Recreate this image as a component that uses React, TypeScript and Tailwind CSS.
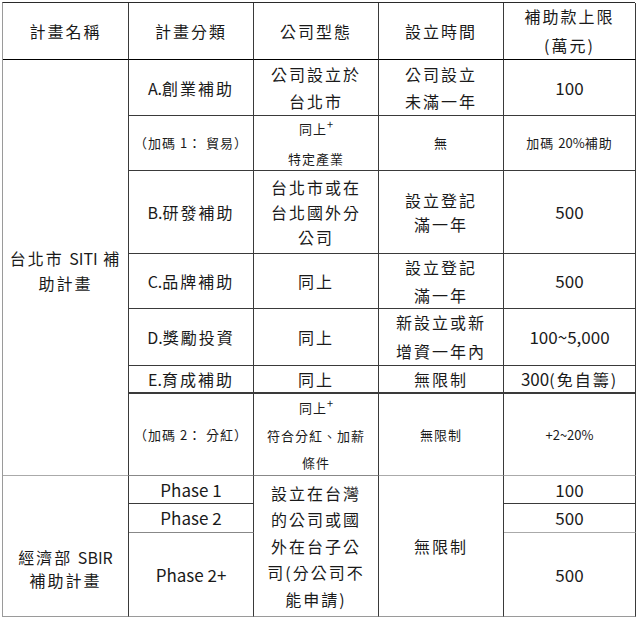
import React from "react";

const cell =
  "flex flex-col items-center justify-center text-center border-r border-b border-[#3a3a3a]";
const big = "text-[16px] tracking-[2px]";
const small = "text-[13px] tracking-[1px]";
const num = "text-[17px]";

function L({ children }: { children: React.ReactNode }) {
  return <span className="tracking-normal">{children}</span>;
}

function Plus() {
  return <span className="relative -top-[5px] text-[11px] tracking-normal">+</span>;
}

export default function App() {
  return (
    <div className="w-[640px] h-[618px] bg-white pl-[2px] pt-[2px] text-[#1a1a1a] font-['Noto_Sans_CJK_TC','Noto_Sans',sans-serif]">
      <div className="grid w-[633px] grid-cols-[126px_125px_125px_125px_132px] grid-rows-[57px_56px_55px_83px_55px_57px_28px_82px_28px_29px_84px] border-l border-t border-l-[#9a9a9a] border-t-[#2a2a2a]">
        {/* header */}
        <div className={`${cell} ${big} col-start-1 row-start-1 border-b-black`}>計畫名稱</div>
        <div className={`${cell} ${big} col-start-2 row-start-1 border-b-black`}>計畫分類</div>
        <div className={`${cell} ${big} col-start-3 row-start-1 border-b-black`}>公司型態</div>
        <div className={`${cell} ${big} col-start-4 row-start-1 border-b-black`}>設立時間</div>
        <div className={`${cell} ${big} col-start-5 row-start-1 border-b-black leading-[29px]`}>
          <span>補助款上限</span>
          <span>(萬元)</span>
        </div>

        {/* SITI */}
        <div className={`${cell} ${big} col-start-1 row-start-2 row-span-7 leading-[25px] pt-[6px] border-b-[#aaaaaa]`}>
          <span>
            台北市 <L>SITI</L> 補
          </span>
          <span>助計畫</span>
        </div>

        {/* A */}
        <div className={`${cell} ${big} col-start-2 row-start-2`}>
          <span>
            <L>A.</L>創業補助
          </span>
        </div>
        <div className={`${cell} ${big} col-start-3 row-start-2 leading-[27px]`}>
          <span>公司設立於</span>
          <span>台北市</span>
        </div>
        <div className={`${cell} ${big} col-start-4 row-start-2 leading-[27px]`}>
          <span>公司設立</span>
          <span>未滿一年</span>
        </div>
        <div className={`${cell} ${num} col-start-5 row-start-2`}>100</div>

        {/* 加碼1 */}
        <div className={`${cell} ${small} col-start-2 row-start-3`}>（加碼 1： 貿易）</div>
        <div className={`${cell} ${small} col-start-3 row-start-3 leading-[29px]`}>
          <span>
            同上
            <Plus />
          </span>
          <span>特定產業</span>
        </div>
        <div className={`${cell} ${small} col-start-4 row-start-3`}>無</div>
        <div className={`${cell} ${small} col-start-5 row-start-3`}>
          <span>
            加碼 <L>20%</L>補助
          </span>
        </div>

        {/* B */}
        <div className={`${cell} ${big} col-start-2 row-start-4`}>
          <span>
            <L>B.</L>研發補助
          </span>
        </div>
        <div className={`${cell} ${big} col-start-3 row-start-4 leading-[25px]`}>
          <span>台北市或在</span>
          <span>台北國外分</span>
          <span>公司</span>
        </div>
        <div className={`${cell} ${big} col-start-4 row-start-4 leading-[24px]`}>
          <span>設立登記</span>
          <span>滿一年</span>
        </div>
        <div className={`${cell} ${num} col-start-5 row-start-4`}>500</div>

        {/* C */}
        <div className={`${cell} ${big} col-start-2 row-start-5`}>
          <span>
            <L>C.</L>品牌補助
          </span>
        </div>
        <div className={`${cell} ${big} col-start-3 row-start-5`}>同上</div>
        <div className={`${cell} ${big} col-start-4 row-start-5 leading-[28px]`}>
          <span>設立登記</span>
          <span>滿一年</span>
        </div>
        <div className={`${cell} ${num} col-start-5 row-start-5`}>500</div>

        {/* D */}
        <div className={`${cell} ${big} col-start-2 row-start-6`}>
          <span>
            <L>D.</L>獎勵投資
          </span>
        </div>
        <div className={`${cell} ${big} col-start-3 row-start-6`}>同上</div>
        <div className={`${cell} ${big} col-start-4 row-start-6 leading-[29px]`}>
          <span>新設立或新</span>
          <span>增資一年內</span>
        </div>
        <div className={`${cell} ${num} col-start-5 row-start-6`}>100~5,000</div>

        {/* E */}
        <div className={`${cell} ${big} col-start-2 row-start-7 border-b-2`}>
          <span>
            <L>E.</L>育成補助
          </span>
        </div>
        <div className={`${cell} ${big} col-start-3 row-start-7 border-b-2`}>同上</div>
        <div className={`${cell} ${big} col-start-4 row-start-7 border-b-2`}>無限制</div>
        <div className={`${cell} ${big} col-start-5 row-start-7 border-b-2`}>
          <span>
            <span className="text-[17px] tracking-normal">300</span>(免自籌)
          </span>
        </div>

        {/* 加碼2 */}
        <div className={`${cell} ${small} col-start-2 row-start-8 border-b-[#888888]`}>（加碼 2： 分紅）</div>
        <div className={`${cell} ${small} col-start-3 row-start-8 leading-[27px] border-b-[#888888]`}>
          <span>
            同上
            <Plus />
          </span>
          <span>符合分紅、加薪</span>
          <span>條件</span>
        </div>
        <div className={`${cell} ${small} col-start-4 row-start-8 border-b-[#aaaaaa]`}>無限制</div>
        <div className={`${cell} text-[13px] col-start-5 row-start-8 border-b-[#aaaaaa]`}>+2~20%</div>

        {/* SBIR */}
        <div className={`${cell} ${big} col-start-1 row-start-9 row-span-3 leading-[23px] pt-[46px] border-b-[#9a9a9a]`}>
          <span>
            經濟部 <L>SBIR</L>
          </span>
          <span>補助計畫</span>
        </div>
        <div className={`${cell} ${num} col-start-2 row-start-9`}>Phase 1</div>
        <div className={`${cell} ${num} col-start-2 row-start-10 border-b-[#888888]`}>Phase 2</div>
        <div className={`${cell} ${num} col-start-2 row-start-11 border-b-[#9a9a9a]`}>Phase 2+</div>
        <div className={`${cell} ${big} col-start-3 row-start-9 row-span-3 leading-[26.5px] border-b-[#9a9a9a]`}>
          <span>設立在台灣</span>
          <span>的公司或國</span>
          <span>外在台子公</span>
          <span>司(分公司不</span>
          <span>能申請)</span>
        </div>
        <div className={`${cell} ${big} col-start-4 row-start-9 row-span-3 border-b-[#9a9a9a]`}>無限制</div>
        <div className={`${cell} ${num} col-start-5 row-start-9`}>100</div>
        <div className={`${cell} ${num} col-start-5 row-start-10 border-b-[#aaaaaa]`}>500</div>
        <div className={`${cell} ${num} col-start-5 row-start-11 border-b-[#9a9a9a]`}>500</div>
      </div>
    </div>
  );
}
